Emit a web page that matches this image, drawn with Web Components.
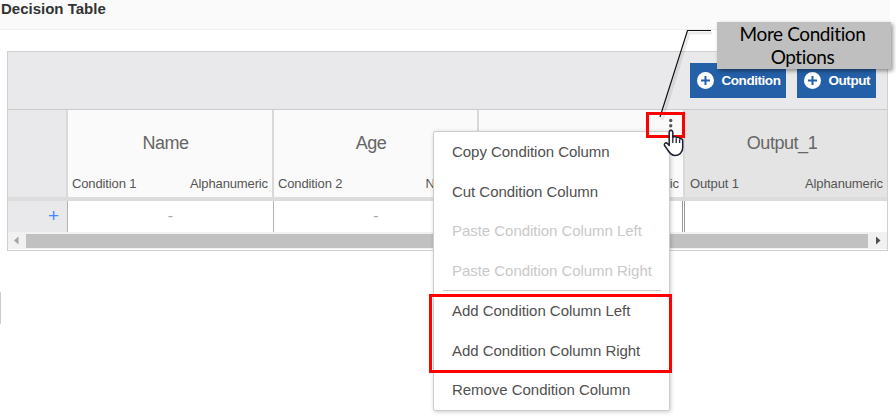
<!DOCTYPE html>
<html lang="en">
<head>
<meta charset="utf-8">
<title>Decision Table</title>
<style>
  body {
    margin: 0;
    background: #fff;
    font-family: "Liberation Sans", Arial, sans-serif;
    overflow: hidden;
  }
</style>
</head>
<body>
<decision-page></decision-page>
<script>
class ActionButton extends HTMLElement {
  constructor() {
    super();
    this.attachShadow({ mode: 'open' });
    this.shadowRoot.innerHTML = `
      <style>
        :host {
          display: flex;
          align-items: center;
          box-sizing: border-box;
          height: 35px;
          padding-left: 7px;
          gap: 7.5px;
          background: #2460a7;
          color: #fff;
          font-size: 13.5px;
          font-weight: bold;
          letter-spacing: -0.45px;
          white-space: nowrap;
        }
        svg { display: block; flex: none; }
      </style>
      <svg width="17" height="17" viewBox="0 0 17 17">
        <circle cx="8.5" cy="8.5" r="8.5" fill="#fff"/>
        <path d="M8.5 4v9M4 8.5h9" stroke="#2460a7" stroke-width="2"/>
      </svg>
      <span><slot></slot></span>
    `;
  }
}

class ColumnHeader extends HTMLElement {
  constructor() {
    super();
    this.attachShadow({ mode: 'open' });
  }

  connectedCallback() {
    this.shadowRoot.innerHTML = `
      <style>
        :host {
          display: flex;
          flex-direction: column;
          justify-content: space-between;
          box-sizing: border-box;
          height: 87px;
          padding: 22px 4px 6px 4px;
          background: #fafafa;
          color: #555;
        }
        .name {
          padding-right: 9px;
          font-size: 18px;
          line-height: 22px;
          text-align: center;
          color: #666;
          letter-spacing: -0.45px;
        }
        .meta {
          display: flex;
          justify-content: space-between;
          font-size: 13px;
          line-height: 15px;
          letter-spacing: -0.13px;
        }
      </style>
      <div class="name"><slot></slot></div>
      <div class="meta">
        <span>${this.getAttribute('label')}</span>
        <span>${this.getAttribute('type')}</span>
      </div>
    `;
  }
}

class TableScrollbar extends HTMLElement {
  constructor() {
    super();
    this.attachShadow({ mode: 'open' });
    this.shadowRoot.innerHTML = `
      <style>
        :host {
          display: flex;
          align-items: center;
          height: 17px;
          background: #f1f1f1;
        }
        .thumb {
          flex: 1;
          height: 14px;
          background: #c1c1c1;
        }
        svg { display: block; }
      </style>
      <svg width="18" height="17"><path d="M10.5 4.5v8L6 8.5z" fill="#a3a3a3"/></svg>
      <div class="thumb"></div>
      <svg width="19" height="17"><path d="M8 4.5v8l4.5-4z" fill="#505050"/></svg>
    `;
  }
}

class DecisionTable extends HTMLElement {
  constructor() {
    super();
    this.attachShadow({ mode: 'open' });
    this.shadowRoot.innerHTML = `
      <style>
        :host {
          display: block;
          box-sizing: border-box;
          width: 881px;
          height: 200px;
          border: 1px solid #d0d0d0;
          background: #fff;
        }
        .toolbar {
          display: flex;
          justify-content: flex-end;
          gap: 11px;
          box-sizing: border-box;
          height: 58px;
          padding: 11px 11px 0 0;
          background: #e9e9eb;
          border-bottom: 1px solid #cbcbcb;
        }
        .row {
          display: grid;
          grid-template-columns: 60px 206px 205px 206px 1fr;
        }
        .row > * { border-right: 2px solid #d9d9d9; }
        .row > :last-child { border-right: 0; }
        .corner { background: #e9e9eb; }
        .out {
          padding-left: 5px;
          background: #e4e4e4;
        }
        .band { height: 4px; background: #dcdcdc; }
        .body > * {
          box-sizing: border-box;
          height: 31px;
          border-right: 1px solid #b4b4b4;
          color: #aaa;
          font-size: 16px;
          line-height: 30px;
          text-align: center;
        }
        .body > .add {
          background: #e9e9eb;
          color: #4488ff;
          font-size: 19px;
          padding-right: 8px;
          text-align: right;
        }
        .body > .last { border-right: 3px double #999; }
      </style>
      <div class="toolbar">
        <action-button style="width:96px">Condition</action-button>
        <action-button style="width:79px">Output</action-button>
      </div>
      <div class="row">
        <div class="corner"></div>
        <column-header label="Condition 1" type="Alphanumeric">Name</column-header>
        <column-header label="Condition 2" type="Numeric">Age</column-header>
        <column-header label="" type="Numeric"></column-header>
        <column-header class="out" label="Output 1" type="Alphanumeric">Output_1</column-header>
      </div>
      <div class="band"></div>
      <div class="row body">
        <div class="add">+</div>
        <div>-</div>
        <div>-</div>
        <div class="last"></div>
        <div></div>
      </div>
      <table-scrollbar></table-scrollbar>
    `;
  }
}

class ContextMenu extends HTMLElement {
  constructor() {
    super();
    this.attachShadow({ mode: 'open' });
    this.shadowRoot.innerHTML = `
      <style>
        :host {
          display: block;
          box-sizing: border-box;
          width: 237px;
          height: 280px;
          background: #fff;
          border: 1px solid #ccc;
          border-radius: 2px;
          box-shadow: 1px 1px 4px rgba(0, 0, 0, 0.2);
          color: #505050;
          font-size: 15px;
          line-height: 39.5px;
          letter-spacing: -0.04px;
          white-space: nowrap;
        }
        .item { padding-left: 18px; height: 39.5px; }
        .disabled { color: #c9c9c9; }
        hr {
          margin: 0 8px 0 9px;
          border: 0;
          height: 1px;
          background: #ccc;
        }
      </style>
      <div class="item">Copy Condition Column</div>
      <div class="item">Cut Condition Column</div>
      <div class="item disabled">Paste Condition Column Left</div>
      <div class="item disabled">Paste Condition Column Right</div>
      <hr>
      <div class="item">Add Condition Column Left</div>
      <div class="item">Add Condition Column Right</div>
      <div class="item">Remove Condition Column</div>
    `;
  }
}

class CallOut extends HTMLElement {
  constructor() {
    super();
    this.attachShadow({ mode: 'open' });
    this.shadowRoot.innerHTML = `
      <style>
        :host {
          display: block;
          box-sizing: border-box;
          width: 174px;
          height: 47px;
          padding-right: 3px;
          background: #bfbfbf;
          box-shadow: 2px 2px 4px rgba(0, 0, 0, 0.4);
          color: #000;
          font: 19px/23px Lato, sans-serif;
          font-variant-ligatures: none;
          letter-spacing: -0.4px;
          text-align: center;
        }
      </style>
      <slot></slot>
    `;
  }
}

class DecisionPage extends HTMLElement {
  constructor() {
    super();
    this.attachShadow({ mode: 'open' });
    this.shadowRoot.innerHTML = `
      <style>
        :host {
          display: block;
          position: relative;
          width: 896px;
          height: 417px;
          overflow: hidden;
        }
        h1 {
          box-sizing: border-box;
          width: 890px;
          height: 30px;
          margin: 0;
          padding-left: 1px;
          background: #fafafa;
          border-bottom: 1px solid #eee;
          color: #333;
          font-size: 15px;
          line-height: 17px;
        }
        decision-table { margin: 21px 0 0 7px; }
        .edge {
          width: 1px;
          height: 32px;
          margin-top: 41px;
          background: #ccc;
        }
        .over { position: absolute; }
        .mark { box-sizing: border-box; border: 3px solid #f00; }
      </style>
      <h1>Decision Table</h1>
      <decision-table></decision-table>
      <div class="edge"></div>

      <context-menu class="over" style="left:433px;top:131px"></context-menu>
      <call-out class="over" style="left:717px;top:22px">More Condition<br>Options</call-out>

      <svg class="over" style="left:640px;top:20px" width="76" height="140" viewBox="640 20 76 140">
        <g fill="#555">
          <circle cx="670.7" cy="120.5" r="1.7"/>
          <circle cx="670.7" cy="125.7" r="1.7"/>
          <circle cx="670.7" cy="131" r="1.7"/>
        </g>
        <path d="M712 33H689L662 120" fill="none" stroke="#000" stroke-opacity=".08" stroke-width="3"/>
        <path d="M711 30.5H687.5L660 117" fill="none" stroke="#111" stroke-width="1.2"/>
      </svg>

      <div class="over mark" style="left:646px;top:112px;width:39px;height:26px"></div>
      <div class="over mark" style="left:429px;top:294px;width:243px;height:79px"></div>

      <svg class="over" style="left:662px;top:128px" width="24" height="30" viewBox="662 128 24 30">
        <path d="M669.2 145.500V132.3Q669.2 130.500 671 130.500Q672.8 130.500 672.8 132.3V137.2Q676 135.8 676.4 137.8Q679.4 136.6 680 138.8Q682.7 138.3 682.7 141V147.500C682.7 152 679.500 155.500 675 155.500C671 155.500 669.2 152.500 667.4 149.500L664.4 145.2C663.8 143 666.2 142.3 667.4 143.500Z"
          fill="#fff" stroke="#1d2233" stroke-width="1.5" stroke-linejoin="round"/>
        <path d="M672.8 137V143M676.2 138.500V143M679.6 139.500V143" stroke="#1d2233" stroke-width="1.3"/>
      </svg>
    `;
  }
}

customElements.define('action-button', ActionButton);
customElements.define('column-header', ColumnHeader);
customElements.define('table-scrollbar', TableScrollbar);
customElements.define('decision-table', DecisionTable);
customElements.define('context-menu', ContextMenu);
customElements.define('call-out', CallOut);
customElements.define('decision-page', DecisionPage);
</script>
</body>
</html>
